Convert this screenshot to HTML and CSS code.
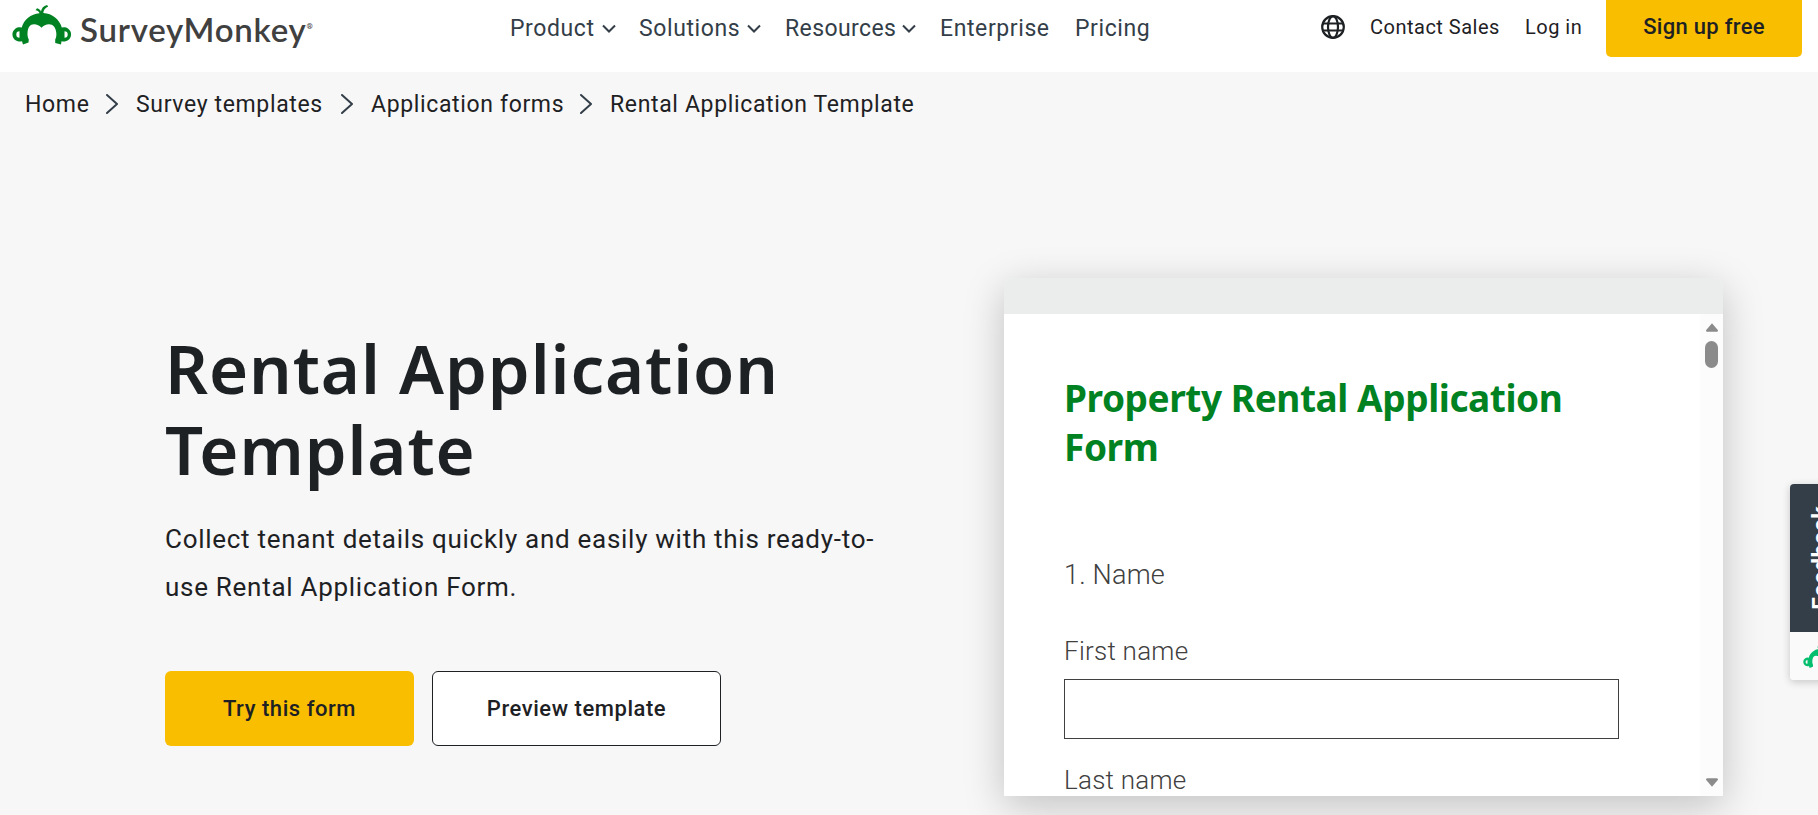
FILE: index.html
```html
<!DOCTYPE html>
<html lang="en">
<head>
    <meta charset="UTF-8">
    <meta name="viewport" content="width=device-width, initial-scale=1.0">
    <title>Rental Application Template</title>
    <link rel="stylesheet" href="styles.css">
</head>
<body>
    <!-- shared icons -->
    <svg class="sprite" aria-hidden="true">
        <symbol id="monkey" viewBox="0 0 60 41">
            <path fill="currentColor" fill-rule="evenodd" d="M27.500 8.200C27 6.500 25.500 5.500 23.500 5.200L25 3.300C27 3.800 28.300 4.800 29 6.500C29.500 3 31.500 1 35 0L36.200 1.500C33 3 31.500 5 31.300 8C40.500 8.500 47.500 14.500 49.800 22.500A7.200 7.200 0 1 1 49.500 36.200L49 39.600L43.200 38L43.200 34.500C44.300 32.500 44.500 30.500 44.300 28C43.800 22.500 41 19.300 37 19.300C34 19.300 31.500 20.800 29.500 22.700C27.500 20.800 25 19.300 22 19.300C18 19.300 15.800 22.500 15.500 28C15.400 30.500 15.700 32.500 16.800 34.500L16.500 37.500L11 39.600L10 36.200A7.200 7.200 0 1 1 9.700 22.500C12 14.500 18.500 9 27.500 8.200ZM7.500 26.300A3.200 3.200 0 1 0 7.500 32.700ZM52.500 26.300V32.700A3.200 3.200 0 1 0 52.500 26.300Z"/>
        </symbol>
        <symbol id="down" viewBox="0 0 14 9">
            <path d="M1 1.500L7 7.500L13 1.500" fill="none" stroke="currentColor" stroke-width="2"/>
        </symbol>
        <symbol id="right" viewBox="0 0 13 20">
            <path d="M1 1L11 10L1 19" fill="none" stroke="currentColor" stroke-width="2" stroke-linecap="round" stroke-linejoin="round"/>
        </symbol>
    </svg>

    <header class="header">
        <a class="logo">
            <svg class="logoIcon"><use href="#monkey"/></svg>
            <span class="logoText">SurveyMonkey</span><span class="logoMark">®</span>
        </a>
        <nav class="nav">
            <a class="navLink product">Product</a><svg class="navArrow"><use href="#down"/></svg>
            <a class="navLink solutions">Solutions</a><svg class="navArrow"><use href="#down"/></svg>
            <a class="navLink resources">Resources</a><svg class="navArrow"><use href="#down"/></svg>
            <a class="navLink enterprise">Enterprise</a>
            <a class="navLink">Pricing</a>
        </nav>
        <div class="account">
            <svg class="globe" viewBox="0 0 24 24" fill="none" stroke="currentColor" stroke-width="2.200">
                <circle cx="12" cy="12" r="10.800"/>
                <ellipse cx="12" cy="12" rx="5" ry="10.800"/>
                <path d="M2 8.500H22M2 15.500H22"/>
            </svg>
            <a class="contact">Contact Sales</a>
            <a class="login">Log in</a>
            <a class="signup">Sign up free</a>
        </div>
    </header>

    <div class="breadcrumb">
        <a class="home">Home</a>
        <svg class="crumbArrow"><use href="#right"/></svg>
        <a class="crumbTemplates">Survey templates</a>
        <svg class="crumbArrow"><use href="#right"/></svg>
        <a class="crumbForms">Application forms</a>
        <svg class="crumbArrow"><use href="#right"/></svg>
        <span>Rental Application Template</span>
    </div>

    <main class="hero">
        <section class="intro">
            <h1>Rental Application<br>Template</h1>
            <p>Collect tenant details quickly and easily with this ready-to-<br>use Rental Application Form.</p>
            <div class="buttons">
                <button class="tryButton">Try this form</button>
                <button class="previewButton">Preview template</button>
            </div>
        </section>
        <section class="preview">
            <div class="previewBar"></div>
            <div class="previewBody">
                <form class="form">
                    <h2>Property Rental Application<br>Form</h2>
                    <div class="question">1. Name</div>
                    <label for="firstName">First name</label>
                    <input type="text" id="firstName">
                    <label for="lastName">Last name</label>
                </form>
                <div class="scrollbar">
                    <svg class="scrollArrow" viewBox="0 0 11 8"><path d="M5.500 0L11 6.500Q11 8 10 8H1Q0 8 0 6.500Z"/></svg>
                    <div class="scrollThumb"></div>
                    <svg class="scrollArrow scrollDown" viewBox="0 0 11 8"><path d="M5.500 8L0 1.500Q0 0 1 0H10Q11 0 11 1.500Z"/></svg>
                </div>
            </div>
        </section>
    </main>

    <div class="feedback">
        <div class="feedbackLabel"><span>Feedback</span></div>
        <div class="feedbackLogo"><svg><use href="#monkey"/></svg></div>
    </div>
</body>
</html>
```
FILE: styles.css
```css
* {
    box-sizing: border-box;
}

body {
    background-color: #f7f7f7;
    color: #1e2124;
    font-family: Roboto, "Liberation Sans", sans-serif;
    margin: 0;
    height: 815px;
    overflow: hidden;
}

.sprite {
    display: none;
}

.header {
    display: flex;
    height: 72px;
    background-color: #ffffff;
}

.logo {
    display: flex;
    width: 510px;
    padding: 5px 0 0 12px;
    color: #008222;
}

.logoIcon {
    width: 60px;
    height: 41px;
}

.logoText {
    margin-left: 8px;
    color: #404040;
    font-family: Lato, sans-serif;
    font-size: 33px;
    font-weight: 600;
    line-height: 49px;
    letter-spacing: 0.75px;
}

.logoMark {
    color: #404040;
    font-size: 8px;
    font-weight: 700;
    line-height: 43px;
}

.nav {
    display: flex;
    width: 811px;
    color: #333e48;
    font-size: 23px;
    line-height: 57px;
}

.navLink {
    letter-spacing: 0.6px;
    white-space: nowrap;
}

.product {
    width: 92px;
}

.solutions {
    width: 108px;
}

.resources {
    width: 117px;
    margin-left: 1px;
    letter-spacing: 0.4px;
}

.enterprise {
    width: 135px;
    margin-left: 1px;
}

.navArrow {
    width: 14px;
    height: 9px;
    margin: 24px 23px 0 0;
}

.account {
    display: flex;
    align-items: flex-start;
    font-size: 20px;
    line-height: 54px;
    white-space: nowrap;
}

.globe {
    width: 24px;
    height: 24px;
    margin: 15px 25px 0 0;
}

.contact {
    width: 155px;
    letter-spacing: 0.5px;
}

.login {
    width: 81px;
    letter-spacing: 0.5px;
}

.signup {
    width: 196px;
    height: 57px;
    border-radius: 0 0 5px 5px;
    background-color: #f9be00;
    font-size: 22px;
    font-weight: 500;
    letter-spacing: 0.3px;
    text-align: center;
}

.breadcrumb {
    display: flex;
    align-items: center;
    height: 64px;
    padding-left: 25px;
    font-size: 23px;
    letter-spacing: 0.65px;
    white-space: nowrap;
}

.home {
    width: 81px;
}

.crumbTemplates {
    width: 205px;
}

.crumbForms {
    width: 209px;
}

.crumbArrow {
    width: 13px;
    height: 20px;
    margin-right: 17px;
    color: #333e48;
}

.hero {
    display: flex;
    height: 679px;
}

.intro {
    width: 1004px;
    padding: 192px 0 0 165px;
}

h1 {
    margin: 0;
    font-family: "Noto Sans", sans-serif;
    font-size: 67px;
    font-weight: 600;
    line-height: 81px;
    letter-spacing: 0.9px;
    white-space: nowrap;
}

p {
    margin: 25px 0 0;
    font-size: 26px;
    line-height: 48px;
    letter-spacing: 0.72px;
    white-space: nowrap;
}

.buttons {
    display: flex;
    gap: 18px;
    margin-top: 60px;
}

button {
    height: 75px;
    padding: 0;
    border: none;
    border-radius: 6px;
    color: #1e2124;
    font-family: inherit;
    font-size: 22px;
    font-weight: 500;
    letter-spacing: 0.55px;
}

.tryButton {
    width: 249px;
    background-color: #f9be00;
}

.previewButton {
    width: 289px;
    border: 1px solid #1e2124;
    background-color: #ffffff;
}

.preview {
    width: 719px;
    height: 518px;
    margin-top: 142px;
    border-radius: 10px 10px 0 0;
    box-shadow: 0 10px 40px rgba(0, 0, 0, 0.22);
}

.previewBar {
    height: 36px;
    border-radius: 10px 10px 0 0;
    background-color: #ebedec;
}

.previewBody {
    display: flex;
    height: 482px;
    overflow: hidden;
    background-color: #ffffff;
}

.form {
    width: 696px;
    padding: 59px 0 0 60px;
    color: #404040;
}

h2 {
    margin: 0;
    color: #008222;
    font-family: "Noto Sans", sans-serif;
    font-size: 37px;
    font-weight: 700;
    line-height: 49px;
    letter-spacing: -0.43px;
    white-space: nowrap;
}

.question {
    margin-top: 84px;
    font-size: 27px;
    font-weight: 300;
    line-height: 40px;
    letter-spacing: 0.2px;
}

label {
    display: block;
    margin-top: 38px;
    font-size: 26px;
    font-weight: 300;
    line-height: 36px;
    letter-spacing: 0.25px;
}

input {
    display: block;
    width: 555px;
    height: 60px;
    margin-top: 10px;
    border: 1px solid #404040;
}

input + label {
    margin-top: 23px;
}

.scrollbar {
    display: flex;
    flex-direction: column;
    align-items: center;
    width: 23px;
    padding: 9px 0;
    background-color: #fcfcfc;
}

.scrollArrow {
    width: 12px;
    height: 9px;
    fill: #8b8b8b;
}

.scrollThumb {
    width: 13px;
    height: 27px;
    margin-top: 9px;
    border-radius: 7px;
    background-color: #8b8b8b;
}

.scrollDown {
    margin-top: auto;
}

/* tab hanging off the right edge of the window */
.feedback {
    position: absolute;
    top: 484px;
    right: -34px;
    width: 62px;
    height: 196px;
    overflow: hidden;
    border-radius: 4px;
    box-shadow: 0 2px 8px rgba(0, 0, 0, 0.2);
}

.feedbackLabel {
    display: flex;
    align-items: center;
    justify-content: center;
    height: 148px;
    background-color: #333e48;
    color: #ffffff;
    font-size: 23px;
    font-weight: 700;
    letter-spacing: 0.5px;
}

.feedbackLabel span {
    writing-mode: vertical-rl;
    transform: rotate(180deg);
}

.feedbackLogo {
    height: 48px;
    padding: 12px 0 0 13px;
    background-color: #fafafa;
    color: #05bf6f;
}

.feedbackLogo svg {
    width: 36px;
    height: 25px;
}
```
